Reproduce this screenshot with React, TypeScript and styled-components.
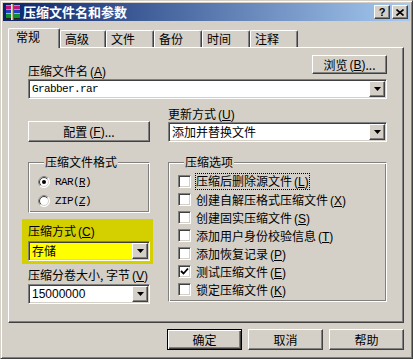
import React from "react";
import styled, { createGlobalStyle, css } from "styled-components";

const face = "#d4d0c8";

const GlobalStyle = createGlobalStyle`
  html, body {
    margin: 0;
    padding: 0;
    background: ${face};
  }
  body {
    font-family: "Noto Sans CJK SC", "Liberation Sans", sans-serif;
    font-size: 12px;
    color: #000;
  }
  * {
    box-sizing: border-box;
  }
`;

const raised = css`
  border: 1px solid;
  border-color: #fff #404040 #404040 #fff;
  box-shadow: inset -1px -1px #808080;
`;

const sunken = css`
  border: 1px solid;
  border-color: #808080 #fff #fff #808080;
  box-shadow: inset 1px 1px #404040, inset -1px -1px ${face};
`;

const etched = css`
  border: 1px solid;
  border-color: #808080 #fff #fff #808080;
  box-shadow: inset 1px 1px #fff, inset -1px -1px #808080;
`;

const mono = css`
  font-family: "Liberation Mono", monospace;
  font-size: 11px;
  letter-spacing: -0.6px;
`;

const Window = styled.div`
  width: 413px;
  height: 359px;
  background: ${face};
  border: 1px solid;
  border-color: ${face} #404040 #404040 ${face};
  box-shadow: inset 1px 1px #fff, inset -1px -1px #808080;
  padding: 2px;
  display: flex;
  flex-direction: column;
`;

const TitleBar = styled.div`
  height: 18px;
  flex: none;
  display: flex;
  align-items: center;
  gap: 2px;
  padding: 0 2px;
  background: linear-gradient(to right, #0a246a, #a6caf0);
`;

const Title = styled.span`
  color: #fff;
  font-weight: bold;
  font-size: 13px;
  line-height: 16px;
`;

const TitleButtons = styled.div`
  margin-left: auto;
  display: flex;
  gap: 2px;
`;

const CaptionButton = styled.div`
  ${raised};
  width: 16px;
  height: 14px;
  background: ${face};
  display: flex;
  align-items: center;
  justify-content: center;
  font-family: "Liberation Sans", sans-serif;
  font-weight: bold;
  font-size: 11px;
  line-height: 12px;
`;

const Body = styled.div`
  flex: 1;
  display: flex;
  flex-direction: column;
  padding: 7px 6px 6px 5px;
`;

const TabStrip = styled.div`
  display: flex;
  align-items: flex-end;
  height: 19px;
  position: relative;
  z-index: 1;
`;

const Tab = styled.div<{ $active?: boolean; $w: number }>`
  width: ${(p) => p.$w}px;
  height: ${(p) => (p.$active ? 20 : 17)}px;
  margin-bottom: ${(p) => (p.$active ? -1 : 0)}px;
  background: ${face};
  border-left: 1px solid #fff;
  border-top: 1px solid #fff;
  border-right: 1px solid #404040;
  border-top-left-radius: 2px;
  border-top-right-radius: 2px;
  box-shadow: inset -1px 0 #808080;
  padding-left: ${(p) => (p.$active ? 7 : 4)}px;
  line-height: 16px;
  white-space: nowrap;
`;

const Panel = styled.div`
  ${raised};
  height: 276px;
  flex: none;
  padding: 7px 16px 0 19px;
  display: flex;
  flex-direction: column;
`;

const TopRow = styled.div`
  display: flex;
  justify-content: space-between;
  height: 24px;
`;

const Label = styled.div<{ $top?: number }>`
  line-height: 14px;
  white-space: nowrap;
  margin-top: ${(p) => p.$top ?? 0}px;
`;

const Mn = styled.span`
  font-family: "Liberation Sans", sans-serif;
  margin-left: 2px;
`;

const Button = styled.button<{ $w: number; $h: number; $default?: boolean }>`
  ${raised};
  width: ${(p) => p.$w}px;
  height: ${(p) => p.$h}px;
  background: ${face};
  padding: 0;
  margin: 0;
  font-family: inherit;
  font-size: 12px;
  color: #000;
  display: flex;
  align-items: center;
  justify-content: center;
  white-space: nowrap;
  ${(p) =>
    p.$default &&
    css`
      border: 1px solid #000;
      box-shadow: inset 1px 1px #fff, inset -1px -1px #404040,
        inset -2px -2px #808080;
    `}
`;

const Combo = styled.div<{ $bg?: string }>`
  ${sunken};
  height: 20px;
  width: 100%;
  padding: 1px;
  display: flex;
  background: ${(p) => p.$bg ?? "#fff"};
`;

const ComboText = styled.div<{ $mono?: boolean; $sans?: boolean }>`
  flex: 1;
  padding-left: 2px;
  line-height: 16px;
  white-space: nowrap;
  overflow: hidden;
  ${(p) => p.$mono && mono}
  ${(p) =>
    p.$sans &&
    css`
      font-family: "Liberation Sans", sans-serif;
      font-size: 12px;
    `}
`;

const DropButton = styled.div`
  ${raised};
  width: 16px;
  height: 16px;
  flex: none;
  background: ${face};
  display: flex;
  align-items: center;
  justify-content: center;
`;

const MiddleGrid = styled.div`
  display: grid;
  grid-template-columns: 122px 219px;
  column-gap: 18px;
  margin-top: 8px;
  align-items: end;
`;

const LowerGrid = styled.div`
  display: grid;
  grid-template-columns: 122px 219px;
  column-gap: 18px;
  margin-top: 13px;
  align-items: start;
`;

const Stack = styled.div<{ $top?: number }>`
  display: flex;
  flex-direction: column;
  margin-top: ${(p) => p.$top ?? 0}px;
`;

const Group = styled.fieldset<{ $bottom: number }>`
  ${etched};
  margin: 0;
  min-width: 0;
  padding: 3px 0 ${(p) => p.$bottom}px 9px;
`;

const Legend = styled.legend`
  margin-left: 6px;
  padding: 0 1px;
  line-height: 14px;
  background: ${face};
`;

const OptionRow = styled.div<{ $h: number }>`
  display: flex;
  align-items: center;
  gap: 5px;
  height: ${(p) => p.$h}px;
  white-space: nowrap;
`;

const RadioText = styled.span`
  ${mono};
`;

const CheckBox = styled.div`
  ${sunken};
  width: 13px;
  height: 13px;
  flex: none;
  background: #fff;
  display: flex;
  align-items: center;
  justify-content: center;
`;

const Focused = styled.span`
  outline: 1px dotted #000;
  outline-offset: 0;
  line-height: 14px;
`;

const Highlight = styled.div`
  background: #d4d000;
  margin: 6px -3px 0 -6px;
  padding: 5px 3px 3px 6px;
  display: flex;
  flex-direction: column;
  gap: 2px;
`;

const ButtonRow = styled.div`
  display: flex;
  justify-content: flex-end;
  gap: 6px;
  margin-top: 6px;
`;

const Key = ({ k }: { k: string }) => (
  <Mn>
    (<u>{k}</u>)
  </Mn>
);

const Arrow = () => (
  <svg width="7" height="4" viewBox="0 0 7 4">
    <path d="M0 0H7L3.5 4Z" fill="#000" />
  </svg>
);

const Dropdown = ({
  text,
  bg,
  mono,
  sans,
}: {
  text: string;
  bg?: string;
  mono?: boolean;
  sans?: boolean;
}) => (
  <Combo $bg={bg}>
    <ComboText $mono={mono} $sans={sans}>
      {text}
    </ComboText>
    <DropButton>
      <Arrow />
    </DropButton>
  </Combo>
);

const Radio = ({ checked }: { checked?: boolean }) => (
  <svg width="12" height="12" viewBox="0 0 12 12" style={{ flex: "none" }}>
    <circle cx="6" cy="6" r="5.5" fill="#fff" stroke="#fff" />
    <path d="M2.1 9.9A5.5 5.5 0 0 1 9.9 2.1" fill="none" stroke="#808080" />
    <circle cx="6" cy="6" r="4.5" fill="none" stroke={face} />
    <path d="M2.8 9.2A4.5 4.5 0 0 1 9.2 2.8" fill="none" stroke="#404040" />
    {checked && <circle cx="6" cy="6" r="2" fill="#000" />}
  </svg>
);

const Check = () => (
  <svg width="9" height="9" viewBox="0 0 9 9">
    <path d="M1 4L3.5 6.5L8 1.5" fill="none" stroke="#000" strokeWidth="1.8" />
  </svg>
);

const RarIcon = () => (
  <svg width="16" height="16" viewBox="0 0 16 16" style={{ flex: "none" }}>
    <rect x="1" y="1" width="14" height="4" fill="#c0187a" />
    <rect x="1" y="1" width="14" height="1" fill="#f070c0" />
    <rect x="1" y="5" width="14" height="4" fill="#2040c0" />
    <rect x="1" y="5" width="14" height="1" fill="#60a0ff" />
    <rect x="1" y="9" width="14" height="5" fill="#109030" />
    <rect x="1" y="9" width="14" height="1" fill="#60e080" />
    <rect x="1" y="14" width="14" height="1" fill="#202020" />
    <rect x="6" y="0" width="3" height="16" fill="#c8b890" />
    <rect x="6" y="0" width="1" height="16" fill="#f0e8d0" />
    <rect x="8" y="0" width="1" height="16" fill="#706040" />
  </svg>
);

const CloseGlyph = () => (
  <svg width="8" height="7" viewBox="0 0 8 7">
    <path d="M0.5 0.5L7.5 6.5M7.5 0.5L0.5 6.5" stroke="#000" strokeWidth="1.6" />
  </svg>
);

const tabs: [string, number][] = [
  ["常规", 52],
  ["高级", 46],
  ["文件", 48],
  ["备份", 48],
  ["时间", 48],
  ["注释", 48],
];

const options: { text: string; k: string; checked?: boolean; focus?: boolean }[] = [
  { text: "压缩后删除源文件", k: "L", focus: true },
  { text: "创建自解压格式压缩文件", k: "X" },
  { text: "创建固实压缩文件", k: "S" },
  { text: "添加用户身份校验信息", k: "T" },
  { text: "添加恢复记录", k: "P" },
  { text: "测试压缩文件", k: "E", checked: true },
  { text: "锁定压缩文件", k: "K" },
];

export default function App() {
  return (
    <>
      <GlobalStyle />
      <Window>
        <TitleBar>
          <RarIcon />
          <Title>压缩文件名和参数</Title>
          <TitleButtons>
            <CaptionButton>?</CaptionButton>
            <CaptionButton>
              <CloseGlyph />
            </CaptionButton>
          </TitleButtons>
        </TitleBar>
        <Body>
          <TabStrip>
            {tabs.map(([name, w], i) => (
              <Tab key={name} $w={w} $active={i === 0}>
                {name}
              </Tab>
            ))}
          </TabStrip>
          <Panel>
            <TopRow>
              <Label $top={9}>
                压缩文件名
                <Key k="A" />
              </Label>
              <Button $w={75} $h={19}>
                浏览<Key k="B" />...
              </Button>
            </TopRow>
            <Dropdown text="Grabber.rar" mono />
            <MiddleGrid>
              <Button $w={122} $h={21}>
                配置<Key k="F" />...
              </Button>
              <Stack>
                <Label>
                  更新方式
                  <Key k="U" />
                </Label>
                <Dropdown text="添加并替换文件" />
              </Stack>
            </MiddleGrid>
            <LowerGrid>
              <Stack>
                <Group $bottom={2}>
                  <Legend>压缩文件格式</Legend>
                  <OptionRow $h={19}>
                    <Radio checked />
                    <RadioText>
                      RAR(<u>R</u>)
                    </RadioText>
                  </OptionRow>
                  <OptionRow $h={19}>
                    <Radio />
                    <RadioText>
                      ZIP(<u>Z</u>)
                    </RadioText>
                  </OptionRow>
                </Group>
                <Highlight>
                  <Label>
                    压缩方式
                    <Key k="C" />
                  </Label>
                  <Dropdown text="存储" bg="#ffff00" />
                </Highlight>
                <Label $top={4}>
                  压缩分卷大小, 字节
                  <Key k="V" />
                </Label>
                <Stack $top={1}>
                  <Dropdown text="15000000" sans />
                </Stack>
              </Stack>
              <Group $bottom={3}>
                <Legend>压缩选项</Legend>
                {options.map((o) => (
                  <OptionRow key={o.k} $h={18}>
                    <CheckBox>{o.checked && <Check />}</CheckBox>
                    {o.focus ? (
                      <Focused>
                        {o.text}
                        <Key k={o.k} />
                      </Focused>
                    ) : (
                      <span>
                        {o.text}
                        <Key k={o.k} />
                      </span>
                    )}
                  </OptionRow>
                ))}
              </Group>
            </LowerGrid>
          </Panel>
          <ButtonRow>
            <Button $w={75} $h={21} $default>
              确定
            </Button>
            <Button $w={75} $h={21}>
              取消
            </Button>
            <Button $w={75} $h={21}>
              帮助
            </Button>
          </ButtonRow>
        </Body>
      </Window>
    </>
  );
}
